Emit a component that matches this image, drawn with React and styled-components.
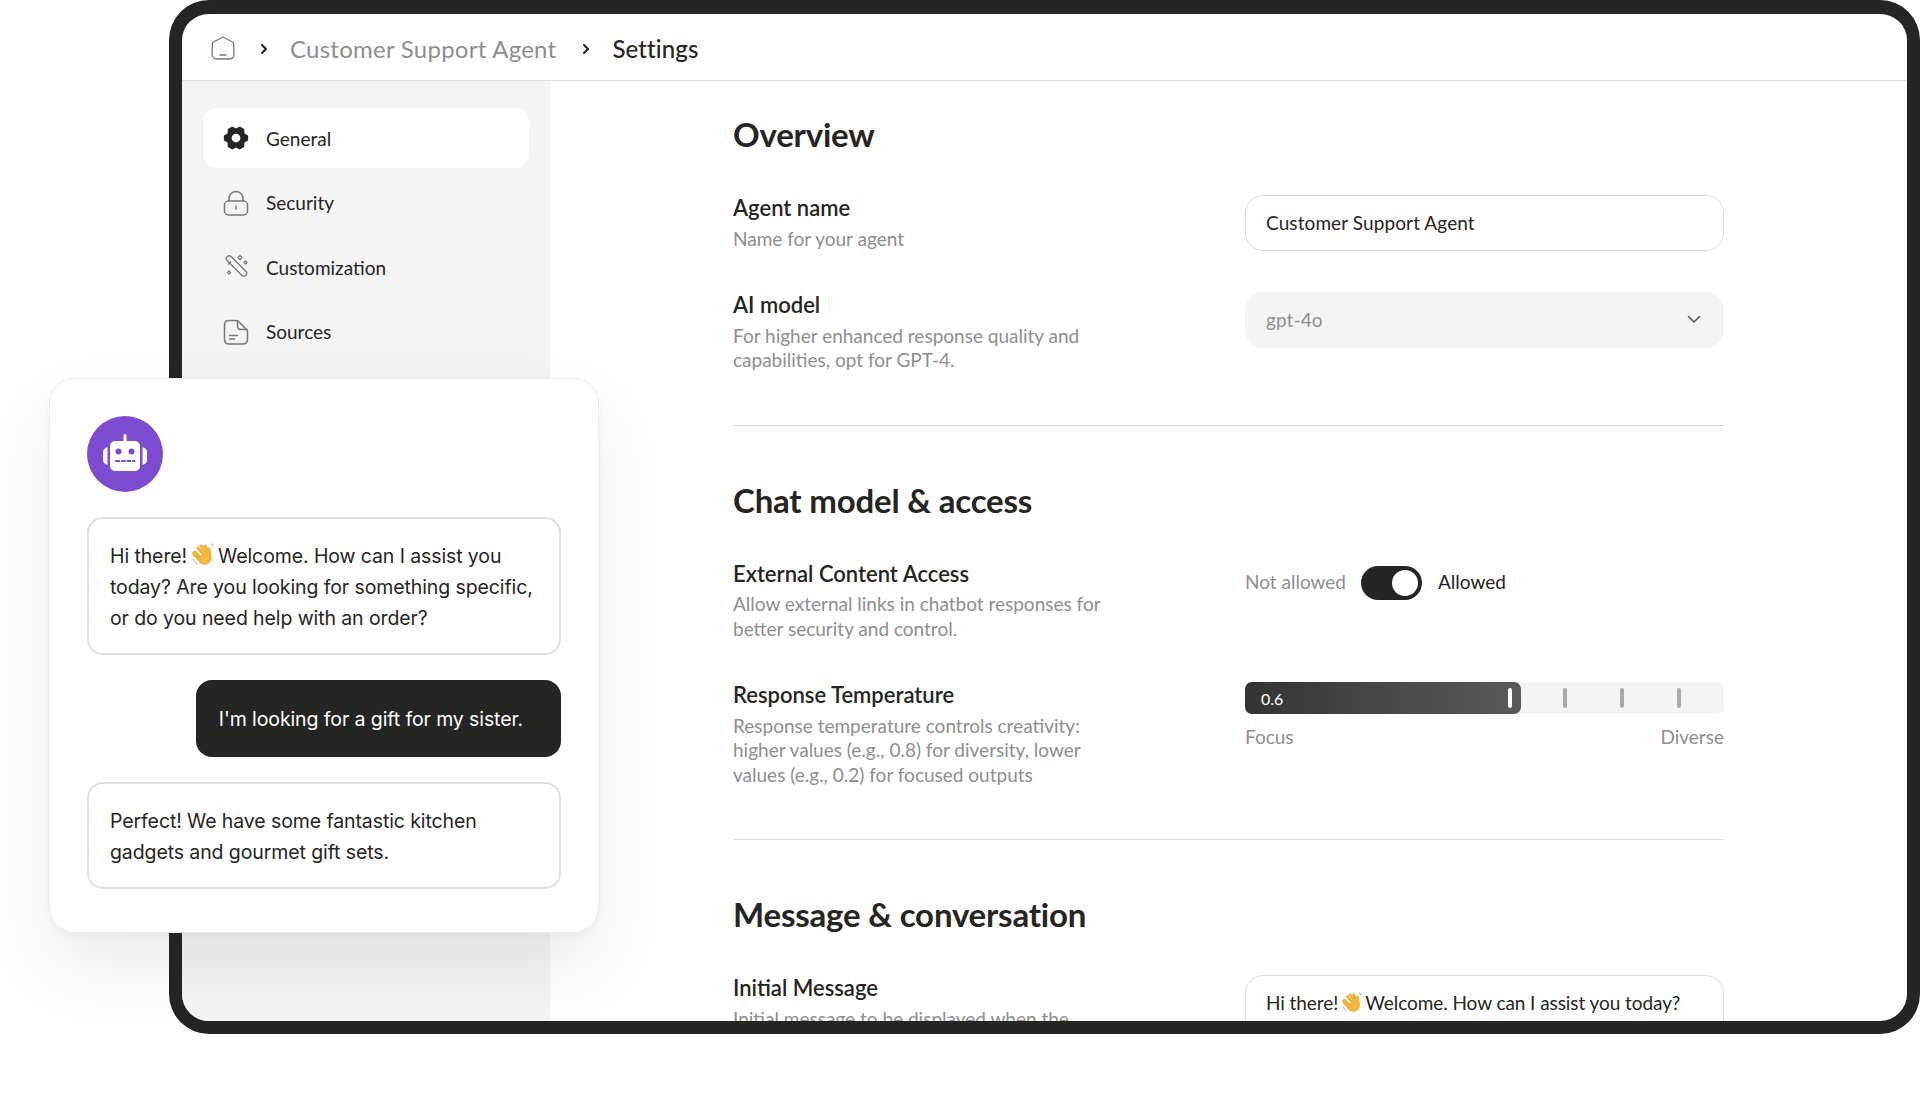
import React from 'react'
import styled, { createGlobalStyle } from 'styled-components'
import { PiGearSixFill } from 'react-icons/pi'

const UI_FONT = '"Lato", "Noto Sans", sans-serif'
const DARK = '#252523'
const MUTED = '#8e8e92'
const LINE = '#dcdcde'

const GlobalStyle = createGlobalStyle`
  html, body {
    margin: 0;
    padding: 0;
    background: #fff;
    font-family: ${UI_FONT};
    color: ${DARK};
  }
  * { box-sizing: border-box; }
`

const Page = styled.div`
  position: relative;
  width: 1920px;
  height: 1105px;
  padding-left: 169px;
  overflow: hidden;
  background: #fff;
`

const Frame = styled.div`
  width: 1751px;
  height: 1034px;
  border: solid ${DARK};
  border-width: 14px 13px 13px;
  border-radius: 40px;
  overflow: hidden;
  background: #fff;
  display: flex;
  flex-direction: column;
`

const TopBar = styled.header`
  flex: 0 0 67px;
  display: flex;
  align-items: center;
  padding: 2px 0 0 28px;
  border-bottom: 1px solid ${LINE};
`

const Crumb = styled.span`
  font-size: 24px;
  letter-spacing: ${(p) => (p.$current ? '0.1px' : '0.25px')};
  color: ${(p) => (p.$current ? DARK : MUTED)};
  font-weight: ${(p) => (p.$current ? 500 : 400)};
`

const ChevronWrap = styled.span`
  display: flex;
  padding-top: 2px;
  margin: 0 ${(p) => p.$right}px 0 ${(p) => p.$left}px;
`

const Body = styled.div`
  flex: 1;
  display: flex;
  min-height: 0;
`

const Sidebar = styled.aside`
  flex: 0 0 368px;
  background: #f4f4f4;
  padding: 27px 21px 0 22px;
  display: flex;
  flex-direction: column;
`

const NavItem = styled.div`
  flex: none;
  height: 60px;
  margin-bottom: 4.500px;
  display: flex;
  align-items: center;
  gap: 17px;
  padding-left: 19px;
  border-radius: 14px;
  font-size: 19px;
  background: ${(p) => (p.$active ? '#fff' : 'transparent')};
`

const GearIcon = styled(PiGearSixFill)`
  margin: 0 -1px;
  color: ${DARK};
`

const Main = styled.main`
  flex: 1;
  padding: 33px 0 0 183px;
`

const Section = styled.section`
  width: 991px;
  padding-bottom: 52px;
  margin-bottom: 54px;
  border-bottom: 1px solid ${LINE};
`

const SectionTitle = styled.h2`
  margin: 0 0 40px;
  font-size: 33px;
  line-height: 40px;
  font-weight: 700;
  letter-spacing: -0.2px;
`

const Row = styled.div`
  display: grid;
  grid-template-columns: 512px 479px;
  margin-top: 40px;
  &:first-of-type { margin-top: 0; }
`

const Label = styled.div`
  font-size: 22px;
  line-height: 28px;
  font-weight: 600;
`

const Hint = styled.p`
  margin: 4.500px 0 0;
  width: 380px;
  font-size: 19px;
  line-height: 24.500px;
  color: ${MUTED};
`

const Field = styled.div`
  height: 56px;
  margin-top: 1px;
  display: flex;
  align-items: center;
  justify-content: space-between;
  padding: 0 20px 2px;
  border-radius: 18px;
  font-size: 19px;
  letter-spacing: 0.1px;
  border: 1.500px solid ${(p) => (p.$disabled ? '#f4f4f4' : LINE)};
  background: ${(p) => (p.$disabled ? '#f4f4f4' : '#fff')};
  color: ${(p) => (p.$disabled ? MUTED : DARK)};
`

const MessageField = styled(Field)`
  height: 150px;
  align-items: flex-start;
  padding-top: 14px;
  line-height: 25px;
  letter-spacing: -0.07px;
`

const ToggleRow = styled.div`
  margin-top: 6px;
  height: 34px;
  display: flex;
  align-items: center;
  font-size: 19px;
`

const ToggleText = styled.span`
  margin-top: -2px;
  color: ${(p) => (p.$on ? DARK : MUTED)};
`

const Toggle = styled.span`
  width: 61px;
  height: 34px;
  margin: 0 16px 0 15px;
  padding: 4px;
  display: flex;
  justify-content: flex-end;
  border-radius: 17px;
  background: ${DARK};
  &::after {
    content: '';
    width: 26px;
    height: 26px;
    border-radius: 50%;
    background: #fff;
  }
`

const SliderTrack = styled.div`
  margin-top: 1px;
  height: 32px;
  border-radius: 7px;
  background: #f4f4f4;
  display: flex;
  align-items: center;
`

const SliderFill = styled.div`
  width: 276px;
  height: 100%;
  display: flex;
  align-items: center;
  justify-content: space-between;
  padding: 0 9px 0 16px;
  border-radius: 7px;
  color: #fff;
  font-size: 16px;
  background: linear-gradient(90deg, #333331 0%, #4a4a4b 55%, #59595b 100%);
`

const Tick = styled.span`
  width: 4px;
  height: 20px;
  border-radius: 2px;
  background: ${(p) => (p.$light ? '#fff' : '#a9a9ac')};
  margin-left: ${(p) => p.$gap || 0}px;
`

const SliderLabels = styled.div`
  display: flex;
  justify-content: space-between;
  margin-top: 11px;
  font-size: 19px;
  line-height: 24px;
  color: ${MUTED};
`

const ChatCard = styled.div`
  position: absolute;
  left: 49px;
  top: 378px;
  width: 550px;
  height: 555px;
  padding: 37px 37px 0;
  background: #fff;
  border: 1.500px solid #ececee;
  border-radius: 26px;
  box-shadow: 0 34px 70px rgba(40, 40, 60, 0.085), 0 2px 6px rgba(40, 40, 60, 0.04);
  display: flex;
  flex-direction: column;
`

const Avatar = styled.div`
  flex: none;
  width: 76px;
  height: 76px;
  margin-bottom: 25px;
  border-radius: 50%;
  background: #7d4bd0;
  display: flex;
  align-items: center;
  justify-content: center;
`

const Bubble = styled.div`
  flex: none;
  align-self: ${(p) => (p.$mine ? 'flex-end' : 'stretch')};
  margin-bottom: 25px;
  padding: ${(p) => (p.$mine ? '24px 38px 22px 23px' : '22px 21px 19px')};
  border: ${(p) => (p.$mine ? 'none' : '2px solid #dfdfe1')};
  border-radius: 16px;
  background: ${(p) => (p.$mine ? DARK : '#fff')};
  color: ${(p) => (p.$mine ? '#fff' : DARK)};
  font-family: "Inter", sans-serif;
  font-size: 19.500px;
  line-height: 31px;
  letter-spacing: -0.1px;
`

const Wave = styled.svg`
  width: ${(p) => p.$size}px;
  height: ${(p) => p.$size}px;
  margin: 0 ${(p) => (p.$tight ? 2 : 3)}px 0 ${(p) => (p.$tight ? 3 : 4)}px;
  vertical-align: -3px;
`

const WaveIcon = ({ size = 24, tight }) => (
  <Wave $size={size} $tight={tight} viewBox="0 0 24 24">
    <path d="M7 6l7 8M10 4l6 8M14 4l4 8M18 7l1 7c1 6-5 9-9 6l-7-8c-1-1 .5-2.500 1.500-1.500l4 4" fill="#f4bc45" stroke="#f0b43a" strokeWidth="3" strokeLinecap="round" strokeLinejoin="round" />
    <path d="M2 17l2 3M5 21l1 1M20 2l2 2" stroke="#b9bcc4" strokeWidth="1.200" strokeLinecap="round" fill="none" />
  </Wave>
)

const Chevron = () => (
  <svg width="12" height="12" viewBox="0 0 12 12" fill="none" stroke={DARK} strokeWidth="2.200" strokeLinecap="round" strokeLinejoin="round">
    <path d="M4 2l4 4-4 4" />
  </svg>
)

const HomeIcon = () => (
  <svg width="26" height="26" viewBox="0 0 26 26" fill="none" stroke="#77777b" strokeWidth="1.300" strokeLinejoin="round" strokeLinecap="round">
    <path d="M13 2L23.500 7.500 24 19c0 3-2 5-5 5H7c-3 0-5-2-5-5L2.500 7.500z" />
    <path d="M10 20h6" />
  </svg>
)

const LockIcon = () => (
  <svg width="26" height="26" viewBox="0 0 26 26" fill="none" stroke="#77777b" strokeWidth="1.500" strokeLinecap="round">
    <path d="M6 11V8.500a7 7 0 0 1 14 0V11" />
    <rect x="1.500" y="11" width="23" height="14" rx="4" />
    <path d="M13 16v3" />
  </svg>
)

const WandIcon = () => (
  <svg width="26" height="26" viewBox="0 0 26 26" fill="none" stroke="#77777b" strokeWidth="1.300" strokeLinejoin="round">
    <path d="M4.500 2.500c1-1 2.500-1 3.500 0l15 15c1 1 1 2.500 0 3.500l-.5.500c-1 1-2.500 1-3.500 0l-15-15c-1-1-1-2.500 0-3.500z" />
    <path d="M8 7.500L5 10.500" />
    <path d="M17 1.500l2 2-2 2-2-2zM22.500 7l1.500 1.500-1.500 1.500L21 8.500zM6 17l1.500 1.500L6 20l-1.500-1.500z" />
  </svg>
)

const FileIcon = () => (
  <svg width="26" height="26" viewBox="0 0 26 26" fill="none" stroke="#77777b" strokeWidth="1.500" strokeLinecap="round" strokeLinejoin="round">
    <path d="M6 1.500h7c1 0 2 .5 2.500 1L23 10c.800.800 1.500 1.500 1.500 2.500V20c0 3-2 5-5 5H6c-3 0-4.500-2-4.500-5V6c0-3 1.500-4.500 4.500-4.500z" />
    <path d="M14.500 2v5c0 2 1 3.500 3.500 3.500h6" />
    <path d="M6.500 16.500h8M6.500 20h5" />
  </svg>
)

const ChevronDown = () => (
  <svg width="18" height="18" viewBox="0 0 18 18" fill="none" stroke="#55555a" strokeWidth="1.600" strokeLinecap="round" strokeLinejoin="round">
    <path d="M3.500 6.500L9 12l5.500-5.500" />
  </svg>
)

const RobotIcon = () => (
  <svg width="46" height="46" viewBox="0 0 46 46" fill="#fff">
    <rect x="21.500" y="3" width="3" height="9" rx="1.500" />
    <rect x="8" y="10" width="30" height="30" rx="5" />
    <path d="M5.500 16v18C2.500 33 1 31 1 29v-8c0-2 1.500-4 4.500-5zM40.500 16v18c3-1 4.500-3 4.500-5v-8c0-2-1.500-4-4.500-5z" />
    <circle cx="16.500" cy="20.500" r="3" fill="#7d4bd0" />
    <circle cx="29.500" cy="20.500" r="3" fill="#7d4bd0" />
    <path d="M14 30h3.500M20 30h3M25.500 30h3M31 30h1.500" stroke="#7d4bd0" strokeWidth="2" strokeLinecap="round" />
  </svg>
)

const navItems = [
  { label: 'General', icon: <GearIcon size={28} />, active: true },
  { label: 'Security', icon: <LockIcon /> },
  { label: 'Customization', icon: <WandIcon /> },
  { label: 'Sources', icon: <FileIcon /> },
]

const App = () => {
  return (
    <Page>
      <GlobalStyle />
      <Frame>
        <TopBar>
          <HomeIcon />
          <ChevronWrap $left={22} $right={20}><Chevron /></ChevronWrap>
          <Crumb>Customer Support Agent</Crumb>
          <ChevronWrap $left={24} $right={20}><Chevron /></ChevronWrap>
          <Crumb $current>Settings</Crumb>
        </TopBar>
        <Body>
          <Sidebar>
            {navItems.map(({ label, icon, active }) => (
              <NavItem key={label} $active={active}>
                {icon}
                <span>{label}</span>
              </NavItem>
            ))}
          </Sidebar>
          <Main>
            <Section>
              <SectionTitle>Overview</SectionTitle>
              <Row>
                <div>
                  <Label>Agent name</Label>
                  <Hint>Name for your agent</Hint>
                </div>
                <Field>Customer Support Agent</Field>
              </Row>
              <Row>
                <div>
                  <Label>AI model</Label>
                  <Hint>For higher enhanced response quality and capabilities, opt for GPT-4.</Hint>
                </div>
                <Field $disabled>gpt-4o<ChevronDown /></Field>
              </Row>
            </Section>
            <Section>
              <SectionTitle>Chat model &amp; access</SectionTitle>
              <Row>
                <div>
                  <Label>External Content Access</Label>
                  <Hint>Allow external links in chatbot responses for better security and control.</Hint>
                </div>
                <ToggleRow>
                  <ToggleText>Not allowed</ToggleText>
                  <Toggle />
                  <ToggleText $on>Allowed</ToggleText>
                </ToggleRow>
              </Row>
              <Row>
                <div>
                  <Label>Response Temperature</Label>
                  <Hint>Response temperature controls creativity: higher values (e.g., 0.8) for diversity, lower values (e.g., 0.2) for focused outputs</Hint>
                </div>
                <div>
                  <SliderTrack>
                    <SliderFill>0.6<Tick $light /></SliderFill>
                    <Tick $gap={42} />
                    <Tick $gap={53} />
                    <Tick $gap={53} />
                  </SliderTrack>
                  <SliderLabels>
                    <span>Focus</span>
                    <span>Diverse</span>
                  </SliderLabels>
                </div>
              </Row>
            </Section>
            <SectionTitle>Message &amp; conversation</SectionTitle>
            <Row>
              <div>
                <Label>Initial Message</Label>
                <Hint>Initial message to be displayed when the</Hint>
              </div>
              <MessageField>
                <span>Hi there!<WaveIcon size={22} tight />Welcome. How can I assist you today? Are you looking for something specific, or do you need help with an order?</span>
              </MessageField>
            </Row>
          </Main>
        </Body>
      </Frame>
      <ChatCard>
        <Avatar><RobotIcon /></Avatar>
        <Bubble>Hi there!<WaveIcon />Welcome. How can I assist you today? Are you looking for something specific, or do you need help with an order?</Bubble>
        <Bubble $mine>I'm looking for a gift for my sister.</Bubble>
        <Bubble>Perfect! We have some fantastic kitchen gadgets and gourmet gift sets.</Bubble>
      </ChatCard>
    </Page>
  )
}

export default App
